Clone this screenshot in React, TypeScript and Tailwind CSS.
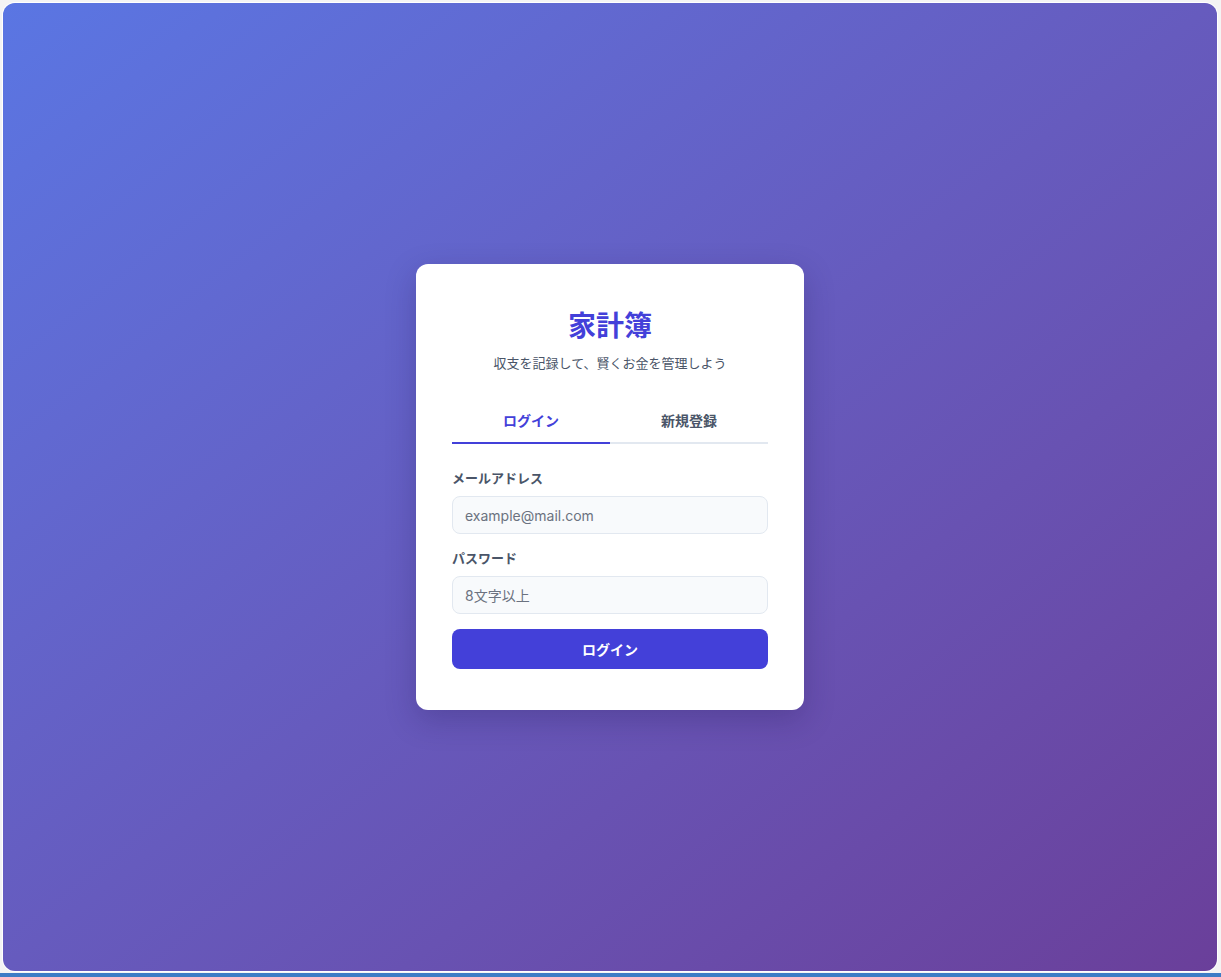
import React from "react";

export default function App() {
  const jp = { fontFamily: 'Inter, "Noto Sans CJK JP", "Noto Sans", sans-serif' };
  return (
    <div className="w-full h-[977px] bg-[#ededed] flex flex-col overflow-hidden" style={jp}>
      <div className="flex-1 pl-[3px] pr-[4px] pt-[3px] pb-[2px] bg-[#f4f4f4]">
        <div className="h-full rounded-[12px] bg-gradient-to-br from-[#5a76e3] to-[#6a3f9a] flex items-center justify-center shadow-[0_0_0_1px_#ffffff]">
          <div className="w-[388px] bg-white rounded-[12px] px-[36px] pt-[40px] pb-[41px] shadow-[0_10px_30px_rgba(30,20,80,0.25)]">
            <h1 className="text-center text-[28px] leading-[44px] font-bold text-[#4340d9]">家計簿</h1>
            <p className="mt-[5px] text-center text-[13px] leading-[20px] text-[#4a5568]">収支を記録して、賢くお金を管理しよう</p>
            <div className="mt-[27px] flex">
              <button className="flex-1 py-[11px] text-[14px] leading-[20px] font-bold text-[#4340d9] border-b-2 border-[#4340d9]">ログイン</button>
              <button className="flex-1 py-[11px] text-[14px] leading-[20px] font-bold text-[#4a5568] border-b-2 border-[#e2e8f0]">新規登録</button>
            </div>
            <div className="mt-[24px]">
              <label className="block text-[13px] leading-[20px] font-bold text-[#4a5568]">メールアドレス</label>
              <input
                type="email"
                placeholder="example@mail.com"
                className="mt-[8px] block w-full h-[38px] px-[12px] rounded-[8px] border border-[#e2e8f0] bg-[#f8fafc] text-[14px] text-[#374151] placeholder:text-[#6b7280] outline-none"
              />
            </div>
            <div className="mt-[14px]">
              <label className="block text-[13px] leading-[20px] font-bold text-[#4a5568]">パスワード</label>
              <input
                type="password"
                placeholder="8文字以上"
                className="mt-[8px] block w-full h-[38px] px-[12px] rounded-[8px] border border-[#e2e8f0] bg-[#f8fafc] text-[14px] text-[#374151] placeholder:text-[#6b7280] outline-none"
              />
            </div>
            <button className="mt-[15px] w-full h-[40px] rounded-[8px] bg-[#4340d9] text-white text-[14px] font-bold">ログイン</button>
          </div>
        </div>
      </div>
      <div className="h-[4px] bg-[#3d7cc6]" />
    </div>
  );
}
